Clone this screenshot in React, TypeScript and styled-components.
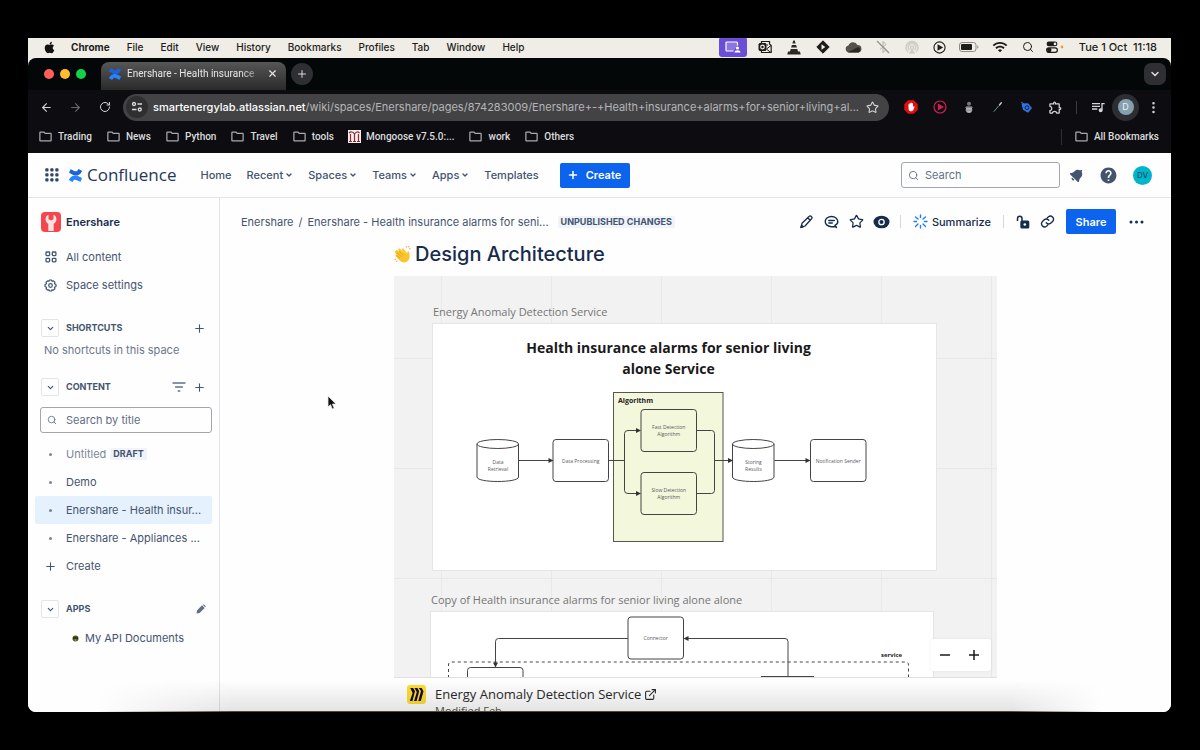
import React from "react";
import styled, { createGlobalStyle } from "styled-components";
import { FaApple, FaBell } from "react-icons/fa";
import { MdHelp, MdWifi, MdQueueMusic, MdOutlineExtension, MdOutlineFolder } from "react-icons/md";
import { Search, ChevronDown, Plus, X, ArrowLeft, ArrowRight, RotateCw, Star, MoreVertical, ExternalLink } from "lucide-react";

const GlobalStyle = createGlobalStyle`
  * { box-sizing: border-box; }
  body { margin: 0; background: #000; }
  button, input { font: inherit; color: inherit; margin: 0; padding: 0; border: 0; background: none; outline: none; }
  button { cursor: pointer; display: inline-flex; align-items: center; justify-content: center; flex: none; }
  a { color: inherit; text-decoration: none; }
  h1, h2, h3, p, ul { margin: 0; padding: 0; font-weight: inherit; }
  ul { list-style: none; }
  svg { display: block; flex: none; }
`;

const Desktop = styled.div`
  height: 100vh;
  padding: 38px 29px 38px 28px;
  background: #000;
  font-family: Inter, "Liberation Sans", sans-serif;
  font-size: 11px;
  line-height: 16px;
`;

const Screen = styled.div`
  height: 100%;
  display: flex;
  flex-direction: column;
  position: relative;
  background: #f0ede8;
  overflow: hidden;
  border-radius: 0 0 8px 8px;
`;

/* macOS menu bar */
const MenuBar = styled.header`
  height: 20px;
  flex: none;
  display: flex;
  align-items: center;
  justify-content: space-between;
  padding: 0 14px 2px 15px;
  background: #f0ede6;
  color: #1d1c1a;
`;
const MenuItems = styled.nav`
  display: flex;
  align-items: center;
  gap: 17px;
  font-size: 10px;

  svg {
    margin-right: -2px;
  }
`;
const MenuItem = styled.a<{ $strong?: boolean }>`
  font-weight: ${(p) => (p.$strong ? 700 : 500)};
  white-space: nowrap;
`;
const StatusItems = styled.div`
  display: flex;
  align-items: center;
`;
const Status = styled.span<{ $w?: number; $dim?: boolean }>`
  width: ${(p) => p.$w ?? 29}px;
  height: 18px;
  display: flex;
  align-items: center;
  justify-content: center;
  opacity: ${(p) => (p.$dim ? 0.4 : 1)};
`;
const ShareStatus = styled(Status)`
  background: #6a4fd6;
  border-radius: 3px;
  height: 20px;
  margin-right: 4px;
`;
const Clock = styled.time`
  margin-left: 10px;
  font-weight: 500;
  white-space: pre;
`;

/* Browser chrome */
const TabStrip = styled.div`
  height: 32px;
  flex: none;
  display: flex;
  align-items: center;
  padding: 0 5px 0 16px;
  background: #030707;
  border-radius: 8px 8px 0 0;
`;
const Lights = styled.div`
  display: flex;
  gap: 6px;
`;
const Light = styled.span<{ $color: string }>`
  width: 10px;
  height: 10px;
  border-radius: 50%;
  background: ${(p) => p.$color};
`;
const Tab = styled.div`
  width: 185px;
  height: 28px;
  align-self: flex-end;
  margin-left: 15px;
  padding: 0 8px 5px;
  display: flex;
  align-items: center;
  gap: 6px;
  border-radius: 8px 8px 0 0;
  background: linear-gradient(#565656, #2a2a2b);
  color: #e6e6e6;
`;
const TabTitle = styled.span`
  flex: 1;
  overflow: hidden;
  white-space: nowrap;
  font-family: Roboto, sans-serif;
  font-size: 10px;
  mask-image: linear-gradient(90deg, #000 85%, rgba(0, 0, 0, 0.2));
`;
const RoundButton = styled.button<{ $square?: boolean }>`
  width: 22px;
  height: 22px;
  border-radius: ${(p) => (p.$square ? "7px" : "50%")};
  background: #2e2e33;
  color: #d8d8d8;
  margin-left: ${(p) => (p.$square ? "auto" : "5px")};
`;
const Toolbar = styled.div`
  height: 34px;
  flex: none;
  display: flex;
  align-items: center;
  background: #0d0c10;
  color: #d5d5d8;
  padding: 0 3px 0 4px;
`;
const ToolButton = styled.button<{ $dim?: boolean }>`
  width: 29px;
  height: 28px;
  opacity: ${(p) => (p.$dim ? 0.45 : 1)};
`;
const AddressBar = styled.div`
  flex: 1;
  min-width: 0;
  height: 27px;
  margin: 0 7px 0 4px;
  padding: 0 6px 0 3px;
  display: flex;
  align-items: center;
  border-radius: 14px;
  background: #434345;
`;
const StarButton = styled.button`
  width: 22px;
  height: 22px;
`;
const SiteInfo = styled.button`
  width: 22px;
  height: 22px;
  border-radius: 50%;
  background: #2f2f31;
  margin-right: 5px;
`;
const Host = styled.label`
  color: #fff;
  font-weight: 500;
`;
const PathInput = styled.input`
  flex: 1;
  min-width: 0;
  color: #b5b5b8;
  text-overflow: ellipsis;
`;
const Divider = styled.span<{ $dark?: boolean }>`
  width: 1px;
  height: 13px;
  margin: 0 6px;
  background: ${(p) => (p.$dark ? "#3c3c40" : "#d5d8de")};
`;
const ProfileRing = styled.button`
  width: 27px;
  height: 27px;
  border-radius: 50%;
  background: #2c2e31;
`;
const ProfileDot = styled.span`
  width: 16px;
  height: 16px;
  border-radius: 50%;
  background: #86a0ae;
  color: #e9f2f6;
  font-size: 9px;
`;
const Bookmarks = styled.nav`
  height: 29px;
  flex: none;
  display: flex;
  align-items: center;
  gap: 14px;
  padding: 0 12px 4px 10px;
  background: #0d0c10;
  color: #dcdcde;
  font-family: Roboto, sans-serif;
  font-size: 10px;
  font-weight: 500;
`;
const Bookmark = styled.a`
  display: flex;
  align-items: center;
  gap: 5px;
  white-space: nowrap;
`;
const AllBookmarks = styled(Bookmark)`
  margin-left: auto;
  padding-left: 12px;
  border-left: 1px solid #303034;
`;

/* Confluence */
const Site = styled.div`
  flex: 1;
  min-height: 0;
  display: flex;
  flex-direction: column;
  background: #fefefe;
  color: #44546f;
  position: relative;
`;
const TopNav = styled.header`
  height: 45px;
  flex: none;
  display: flex;
  align-items: center;
  padding: 0 19px 0 17px;
  border-bottom: 1px solid #e3e4e8;
`;
const Brand = styled.a`
  display: flex;
  align-items: center;
  gap: 5px;
  margin: 0 24px 0 10px;
  color: #253858;
  font-family: "Open Sans", "Noto Sans", sans-serif;
  font-size: 17px;
`;
const NavLinks = styled.nav`
  display: flex;
  align-items: center;
  gap: 15px;
  font-weight: 500;
`;
const NavButton = styled.button`
  gap: 2px;
`;
const PrimaryButton = styled.button`
  height: 25px;
  padding: 0 9px 0 7px;
  gap: 7px;
  border-radius: 2px;
  background: #0c63ee;
  color: #fff;
  font-weight: 600;
`;
const CreateButton = styled(PrimaryButton)`
  margin-left: 21px;
`;
const SearchBox = styled.label<{ $wide?: boolean }>`
  height: 26px;
  display: flex;
  align-items: center;
  gap: ${(p) => (p.$wide ? 6 : 9)}px;
  padding: 0 6px;
  border: 1px solid #a2a6ae;
  border-radius: 3px;
  color: #626f86;
  ${(p) => p.$wide && "width: 159px; margin-left: auto;"}

  input {
    flex: 1;
    min-width: 0;
  }
  input::placeholder {
    color: #626f86;
    opacity: 1;
  }
`;
const NavIcons = styled.div`
  display: flex;
  align-items: center;
  gap: 15px;
  margin-left: 10px;
`;
const Avatar = styled.button`
  width: 19px;
  height: 19px;
  border-radius: 50%;
  background: #00b4cc;
  color: #12566b;
  font-size: 8px;
  font-weight: 500;
`;

const Body = styled.div`
  flex: 1;
  min-height: 0;
  display: flex;
`;
const Sidebar = styled.aside`
  width: 192px;
  flex: none;
  border-right: 1px solid #e3e4e8;
  padding: 12px 7px 0;
`;
const SpaceLink = styled.a`
  height: 24px;
  padding-left: 6px;
  margin-bottom: 9px;
  display: flex;
  align-items: center;
  gap: 5px;
  color: #172b4d;
  font-weight: 600;
`;
const SpaceLogo = styled.span`
  width: 20px;
  height: 20px;
  border-radius: 4px;
  background: #f5464e;
  display: flex;
  align-items: center;
  justify-content: center;
`;
const SideItem = styled.a<{ $active?: boolean }>`
  height: 28px;
  display: grid;
  grid-template-columns: 31px auto 1fr;
  align-items: center;
  border-radius: 2px;
  white-space: nowrap;
  background: ${(p) => (p.$active ? "#e6f1fe" : "transparent")};
`;
const SideIcon = styled.span`
  display: flex;
  justify-content: center;
`;
const Bullet = styled.span`
  width: 3px;
  height: 3px;
  border-radius: 50%;
  background: #7a869a;
`;
const Muted = styled.span`
  color: #7a869a;
`;
const Lozenge = styled.span`
  justify-self: start;
  padding: 0 3px;
  margin-left: 4px;
  border-radius: 2px;
  background: #f0f3fa;
  color: #44546f;
  font-size: 9px;
  line-height: 12px;
  font-weight: 700;
`;
const SectionHead = styled.div`
  height: 20px;
  margin-top: 19px;
  padding: 0 6px;
  display: flex;
  align-items: center;
  gap: 7px;

  h2 {
    flex: 1;
    font-size: 9px;
    font-weight: 700;
  }
`;
const Toggle = styled.button`
  width: 18px;
  height: 18px;
  border: 1px solid #e3e5ea;
  border-radius: 2px;
`;
const Empty = styled.p`
  margin: 4px 0 0 9px;
  color: #6b778c;
`;
const SideSearch = styled.div`
  margin: 10px 0 7px 5px;
`;
const AppLink = styled(SideItem)`
  grid-template-columns: 19px 1fr;
  padding-left: 31px;
  margin-top: 5px;
`;

const Main = styled.main`
  flex: 1;
  min-width: 0;
  position: relative;
`;
const PageBar = styled.div`
  height: 44px;
  padding: 3px 22px 0 21px;
  display: flex;
  align-items: center;
  justify-content: space-between;
`;
const Crumbs = styled.nav`
  display: flex;
  align-items: center;
  gap: 5px;
  white-space: nowrap;
`;
const Actions = styled.div`
  display: flex;
  align-items: center;
  color: #172b4d;
`;
const Action = styled.button`
  width: 25px;
  height: 24px;
`;
const Summarize = styled.button`
  gap: 4px;
  margin: 0 6px;
  font-weight: 500;
`;
const ShareButton = styled(PrimaryButton)`
  min-width: 50px;
  padding: 0 9px;
  margin: 0 8px 0 6px;
`;
const Article = styled.article`
  width: 603px;
  max-width: 100%;
  margin: 0 auto;
`;
const Heading = styled.h1`
  display: flex;
  align-items: center;
  gap: 4px;
  height: 24px;
  font-size: 20px;
  line-height: 24px;
  font-weight: 500;
  color: #172b4d;
`;
const Board = styled.section`
  position: relative;
  height: 402px;
  margin-top: 10px;
  padding-top: 24px;
  overflow: hidden;
  border-bottom: 1px solid #e0e0e0;
  background-color: #f2f2f2;
  background-image: linear-gradient(90deg, #e8e8e8 1px, transparent 1px), linear-gradient(#e8e8e8 1px, transparent 1px);
  background-size: 110px 110px;
  background-position: 47px 82px;
  font-family: "Open Sans", "Noto Sans", sans-serif;
`;
const FrameTitle = styled.h2`
  font-size: 11px;
  line-height: 24px;
  color: #757575;
`;
const Frame = styled.div<{ $second?: boolean }>`
  margin: ${(p) => (p.$second ? "18px 64px 0 37px" : "0 61px 0 39px")};
`;
const Sheet = styled.div`
  background: #fff;
  outline: 1px solid #e6e6e6;
`;
const ZoomControls = styled.div`
  position: absolute;
  right: 6px;
  bottom: 6px;
  width: 60px;
  height: 32px;
  padding-right: 4px;
  display: flex;
  align-items: center;
  justify-content: center;
  gap: 19px;
  background: #fff;
  border-radius: 3px;
  box-shadow: 0 0 4px rgba(0, 0, 0, 0.06);
`;
const EmbedFooter = styled.footer`
  display: grid;
  grid-template-columns: 28px 1fr;
  align-items: center;
  padding: 6px 13px 0;
  font-family: "Open Sans", "Noto Sans", sans-serif;
  color: #2b2b2b;
`;
const EmbedLink = styled.a`
  display: flex;
  align-items: center;
  gap: 3px;
  font-size: 13px;
  line-height: 20px;
`;
const Modified = styled.p`
  grid-column: 2;
  line-height: 14px;
  color: #555;
`;
const Cursor = styled.span`
  position: absolute;
  left: 107px;
  top: 197px;
`;
const DockShade = styled.div`
  position: absolute;
  left: 0;
  right: 0;
  bottom: 0;
  height: 32px;
  border-bottom: 1px solid #57482f;
  background: linear-gradient(transparent, rgba(0, 0, 0, 0.1));
  mask-image: linear-gradient(90deg, transparent 6%, #000 18%, #000 86%, transparent 94%);
  pointer-events: none;
`;

const ConfluenceMark = ({ size = 13 }: { size?: number }) => (
  <svg width={size} height={size} viewBox="0 0 24 24">
    <path fill="#2684ff" d="M.9 18.2c-.3.4-.5.9-.7 1.200-.2.400-.1.900.3 1.200l5 3.100c.4.200.9.100 1.200-.3.200-.3.500-.8.800-1.300 2-3.300 4-2.900 7.700-1.100l5 2.300c.400.200.900 0 1.200-.4l2.400-5.400c.2-.4 0-.9-.4-1.100-1-.5-3.100-1.500-5-2.400C11.600 10.700 5.600 10.900.9 18.200z" />
    <path fill="#1d62d6" d="M23.100 5.800c.3-.4.500-.9.700-1.200.2-.4.100-.9-.3-1.200L18.500.3c-.4-.2-1-.1-1.200.3-.2.300-.5.800-.8 1.300-2 3.300-4 2.900-7.700 1.100L3.900.7c-.4-.2-.9 0-1.200.4L.300 6.500c-.2.400 0 .900.4 1.100 1 .5 3.100 1.500 5 2.400 6.700 3.300 12.700 3.100 17.400-4.200z" />
  </svg>
);

const TuneIcon = () => (
  <svg width="12" height="12" viewBox="0 0 12 12" fill="none" stroke="#dcdcdc" strokeWidth="1.300">
    <circle cx="3" cy="3" r="1.500" /><path d="M6.500 3H11M1 8.500h4.500" /><circle cx="8.800" cy="8.500" r="1.500" />
  </svg>
);

const ShareScreenIcon = () => (
  <svg width="16" height="12" viewBox="0 0 16 12" fill="none" stroke="#fff" strokeWidth="1.200">
    <path d="M8.500 10H2a1 1 0 0 1-1-1V2a1 1 0 0 1 1-1h9.500a1 1 0 0 1 1 1v2.500" fill="#8b76e6" />
    <circle cx="12.500" cy="7" r="1.600" fill="#fff" stroke="none" /><path d="M9.500 11.500c0-3 6-3 6 0z" fill="#fff" stroke="none" />
  </svg>
);

const OutlookIcon = () => (
  <svg width="14" height="14" viewBox="0 0 14 14" fill="none" stroke="#1d1c1a">
    <path d="M3.500 3V1.500h8V4l1.700 1.500v7H3.500V11" strokeWidth="1.200" />
    <rect x="1" y="3.500" width="7" height="7" rx=".8" fill="#1d1c1a" /><circle cx="4.500" cy="7" r="1.800" stroke="#f0ede6" strokeWidth="1.200" /><path d="M8.500 5h1.500M8.500 9l4.500-3.500M9 9.500l4 3" />
  </svg>
);

const ConeIcon = () => (
  <svg width="14" height="15" viewBox="0 0 14 15" fill="#2b2925">
    <path d="M6.300.5h1.400l.9 3H5.400zM4.900 5h4.200l.8 2.500H4.100zM3.700 9h6.600l.7 2.500H13l.7 3H.3l.7-3h2z" />
  </svg>
);

const DiamondIcon = () => (
  <svg width="14" height="14" viewBox="0 0 14 14">
    <path d="M7 .8 13.200 7 7 13.200.8 7z" fill="#1d1c1a" stroke="#1d1c1a" strokeLinejoin="round" />
    <path d="M5.500 4.200 9.300 7 5.500 9.800z" fill="#f0ede6" />
  </svg>
);

const CloudIcon = () => (
  <svg width="17" height="11" viewBox="0 0 17 11">
    <path d="M4 10.500a3.500 3.500 0 0 1-.6-6.900A5 5 0 0 1 12.500 3a3.800 3.800 0 0 1 1 7.500z" fill="#55524c" />
    <path d="M3 10.300 13.300 5a3 3 0 0 1 .2 5.500H4z" fill="#2a2825" />
  </svg>
);

const BluetoothOff = () => (
  <svg width="14" height="14" viewBox="0 0 14 14" fill="none" stroke="#1d1c1a">
    <path d="M4 4.500l6 5-3 3v-11l3 3-6 5" opacity=".7" /><path d="m1 1 12 12" strokeWidth="1.400" />
  </svg>
);

const AirdropIcon = () => (
  <svg width="14" height="14" viewBox="0 0 14 14" fill="none" stroke="#a09c92" strokeWidth="1.500">
    <path d="M3 12a6 6 0 1 1 8 0M4.500 10a3.800 3.800 0 1 1 5 0M6 8.500a1.500 1.500 0 1 1 2 0" /><path d="M5 13l2-4 2 4z" fill="#a09c92" />
  </svg>
);

const PlayIcon = ({ color, size = 13 }: { color: string; size?: number }) => (
  <svg width={size} height={size} viewBox="0 0 14 14" fill="none" stroke={color} strokeWidth="1.200">
    <circle cx="7" cy="7" r="6" /><path d="M5.500 4.500 9.800 7 5.500 9.500z" fill={color} />
  </svg>
);

const BatteryIcon = () => (
  <svg width="20" height="10" viewBox="0 0 20 10">
    <rect x=".5" y=".5" width="16.500" height="9" rx="2.500" fill="none" stroke="#8f8c85" />
    <rect x="2" y="2" width="11" height="6" rx="1" fill="#1d1c1a" /><path d="M18.300 3.300v3.400c1.500-.6 1.500-2.800 0-3.400z" fill="#8f8c85" />
  </svg>
);

const ControlIcon = () => (
  <svg width="18" height="12" viewBox="0 0 18 12">
    <rect x=".6" y=".6" width="10.800" height="4.600" rx="2.300" fill="#1d1c1a" /><circle cx="9" cy="2.900" r="1.300" fill="#f0ede6" />
    <rect x=".6" y="6.800" width="10.800" height="4.600" rx="2.300" fill="none" stroke="#1d1c1a" strokeWidth="1.200" /><circle cx="3.200" cy="9.100" r="2.300" fill="#1d1c1a" />
    <circle cx="16" cy="6" r="1.400" fill="#f29a2e" />
  </svg>
);

const AdblockIcon = () => (
  <svg width="14" height="14" viewBox="0 0 14 14">
    <path d="M4.200.3h5.600l3.900 3.900v5.600l-3.900 3.900H4.200L.3 9.800V4.200z" fill="#e80c12" />
    <path d="M4.500 7V4.200h1V3.300h1.200v-.6h1.200v.6H9V7l.8-.8.900.6L9 10.500c-.6 1-3.500 1-4 0-.4-.8-.5-2-.5-3.500z" fill="#fff" />
  </svg>
);

const BugIcon = () => (
  <svg width="10" height="13" viewBox="0 0 10 13">
    <circle cx="5" cy="2.800" r="2" fill="#77777c" /><path d="M2 5.500h6V9a3 3 0 0 1-6 0z" fill="#b4b4b8" /><path d="M1 6.500h8M1 9h8" stroke="#77777c" strokeWidth=".7" />
  </svg>
);

const PickerIcon = () => (
  <svg width="12" height="12" viewBox="0 0 12 12" stroke="#c9c9cc" strokeLinecap="round">
    <path d="m2 10.500 4.500-5.500" stroke="#5f9a78" /><path d="m7.500 4 1.800-2.300" strokeWidth="1.400" />
  </svg>
);

const TagIcon = () => (
  <svg width="13" height="13" viewBox="0 0 13 13">
    <path d="M1.500 2.500 8 2.300 12 7l-4 4.700-5-3z" fill="#2f77e8" /><circle cx="7" cy="6.700" r="1.900" fill="none" stroke="#0d1c40" /><path d="M1 1l3 2" stroke="#2f77e8" />
  </svg>
);

const MongooseIcon = () => (
  <svg width="13" height="13" viewBox="0 0 13 13">
    <rect width="13" height="13" fill="#f6eeee" /><path d="M1 11.500h3M5 11.500h3M9 11.500h3M2.500 11V4M6.500 11V4M10.500 11V4M1 3c2-2 4-1 5.500 1C8 1.500 10 1.500 11.500 3" fill="none" stroke="#8d2b35" strokeWidth="1.200" />
  </svg>
);

const AppGrid = () => (
  <svg width="14" height="14" viewBox="0 0 14 14" fill="#344563">
    {[0, 5, 10].map((y) => [0, 5, 10].map((x) => <rect key={`${x}-${y}`} x={x + 0.3} y={y + 0.3} width="3.200" height="3.200" rx=".9" />))}
  </svg>
);

const WrenchIcon = () => (
  <svg width="12" height="17" viewBox="0 0 12 17">
    <path d="M3.500.8v4.400L6 6.600l2.500-1.400V.8c3.800 1.500 4 7.300.2 9V17H3.300V9.800C-.5 8.100-.3 2.300 3.500.8z" fill="#f3e3e4" />
  </svg>
);

const ContentIcon = () => (
  <svg width="12" height="12" viewBox="0 0 12 12" fill="none" stroke="#44546f" strokeWidth="1.300">
    {[1, 7.3].map((y) => [1, 7.3].map((x) => <rect key={`${x}-${y}`} x={x} y={y} width="3.600" height="3.600" rx=".8" />))}
  </svg>
);

const GearIcon = () => (
  <svg width="13" height="13" viewBox="0 0 13 13" fill="none" stroke="#44546f" strokeWidth="1.200">
    <path d="M5.500 1h2l.5 1.200 1.400-.3 1.500 1.400-.4 1.400 1.500.8v2l-1.500.8.4 1.400-1.500 1.400L8 10.800 7.500 12h-2L5 10.800l-1.400.3-1.500-1.400.4-1.400L1 7.500v-2l1.500-.8-.4-1.400 1.500-1.400L5 2.200z" strokeLinejoin="round" />
    <circle cx="6.500" cy="6.500" r="1.800" />
  </svg>
);

const FilterIcon = () => (
  <svg width="14" height="10" viewBox="0 0 14 10" stroke="#626f86" strokeWidth="1.300" strokeLinecap="round">
    <path d="M1 1h12M3.500 5h7M6.200 9h1.600" />
  </svg>
);

const SolidPencil = () => (
  <svg width="10" height="10" viewBox="0 0 10 10" fill="#626f86">
    <path d="M6 1.300 8.700 4 3.600 9.100.5 9.600 1 6.400zM6.700.7c1.200-1.200 3.900 1.300 2.600 2.600z" />
  </svg>
);

const EditIcon = () => (
  <svg width="15" height="15" viewBox="0 0 15 15" fill="none" stroke="#172b4d" strokeWidth="1.300" strokeLinejoin="round">
    <path d="M10.300 2.200c1-1.200 3.600 1 2.500 2.300L6 12l-4 1.500 1-4.200zM8.800 4l2.500 2.300" /><path d="m2 13.500.6-2.200 1.500 1.500z" fill="#172b4d" />
  </svg>
);

const CommentIcon = () => (
  <svg width="15" height="14" viewBox="0 0 15 14" fill="none" stroke="#172b4d" strokeWidth="1.400" strokeLinecap="round">
    <path d="M12.500 12.500 11 10.300c1.800-.8 2.800-2 2.800-3.500 0-3-2.700-5.300-6.300-5.300S1.200 3.800 1.200 6.500s2.700 5.200 6.300 5.200h4" /><path d="M4.800 5.500h5.500M4.800 8h3.500" />
  </svg>
);

const EyeIcon = () => (
  <svg width="17" height="14" viewBox="0 0 17 14">
    <ellipse cx="8.500" cy="7" rx="8" ry="6.300" fill="#172b4d" /><circle cx="8.500" cy="7" r="2.700" fill="none" stroke="#fff" strokeWidth="1.300" />
  </svg>
);

const SparkIcon = () => (
  <svg width="15" height="15" viewBox="0 0 15 15" stroke="#1d7afc" strokeWidth="1.400" strokeLinecap="round">
    <path d="M7.500 1v2.500M7.500 11.500V14M1 7.500h2.500M11.500 7.500H14M2.500 3 5 5M10 10l2.500 2.500M12.500 3 10 5M2.500 12.500 5 10" />
  </svg>
);

const UnlockIcon = () => (
  <svg width="14" height="14" viewBox="0 0 14 14">
    <path d="M1.500 6V3.500c0-3 4.500-3 4.500 0V6" fill="none" stroke="#172b4d" strokeWidth="1.500" />
    <rect x="4.300" y="5.500" width="9" height="8" rx="1.500" fill="#172b4d" /><circle cx="8.800" cy="9.500" r="1.300" fill="#fff" />
  </svg>
);

const LinkIcon = () => (
  <svg width="15" height="15" viewBox="0 0 24 24" fill="none" stroke="#172b4d" strokeWidth="2.200" strokeLinecap="round">
    <path d="M10 14a5 5 0 0 0 7.500.5l3-3a5 5 0 0 0-7-7l-1.800 1.700M14 10a5 5 0 0 0-7.500-.5l-3 3a5 5 0 0 0 7 7l1.800-1.700" />
  </svg>
);

const MoreIcon = () => (
  <svg width="15" height="4" viewBox="0 0 15 4" fill="#172b4d"><circle cx="2" cy="2" r="1.500" /><circle cx="7.500" cy="2" r="1.500" /><circle cx="13" cy="2" r="1.500" /></svg>
);

const ApiIcon = () => (
  <svg width="7" height="7" viewBox="0 0 7 7"><circle cx="3.500" cy="3.500" r="3" fill="#4a5a1e" /><path d="M1 3h5" stroke="#1d2109" /><circle cx="3.500" cy="5" r=".8" fill="#a8b86a" /></svg>
);

const ClapIcon = () => (
  <svg width="17" height="18" viewBox="0 0 17 18">
    <path d="M2 4.500c.8-.8 1.500-.5 2.200.2L7 7 4.500 4c-.8-1 .7-2.200 1.600-1.200L10 7l-2-3c-.7-1.200 1-2 1.700-1l3.500 4.500.3-1.700c.3-1 1.500-.8 1.700.2.500 3 1 6.500-1.200 8.800-2.300 2.300-5.700 2-8 0L1.500 10c-.9-.9.300-2 1.200-1.300L1 6.500C.3 5.500 1.200 4.800 2 5z" fill="#fbc62d" transform="translate(0 1)" />
    <path d="m3 7.500 4.500 4.300M5 6l4.500 4.300M2.800 10.500 6 13.300" stroke="#e29b1b" strokeWidth=".8" /><path d="m12 1 .5 1.500M15 1l-.8 1.500M.5 14.500l1.500-.4M2.500 17l.7-1.500M16.500 3.500 15 4" stroke="#f0a052" />
  </svg>
);

const MiroIcon = () => (
  <svg width="19" height="19" viewBox="0 0 19 19">
    <rect width="19" height="19" rx="3" fill="#ffdd33" />
    <path d="M3.300 3h2.900l1.800 3.300L5.400 16H2.900L5.600 8zM7.500 3h2.900l1.800 3.300L9.600 16H7.100L9.800 7zM11.700 3h2.900l1.900 3.300L13.800 16h-2.500L14 6z" fill="#150b2b" />
  </svg>
);

const Label = ({ x, y, lines }: { x: number; y: number; lines: string[] }) => (
  <text x={x} y={y} textAnchor="middle" fontSize="5" fill="#5a5a5a" stroke="none">
    {lines.map((l, i) => (
      <tspan key={l} x={x} dy={i ? 7 : 0}>{l}</tspan>
    ))}
  </text>
);

const Cylinder = ({ x, lines }: { x: number; lines: string[] }) => (
  <g>
    <path d={`M${x} 120v33c0 6 41.500 6 41.500 0v-33`} />
    <ellipse cx={x + 20.75} cy="120" rx="20.750" ry="4.500" />
    <Label x={x + 21} y={139.5} lines={lines} />
  </g>
);

const Node = ({ x, y, lines }: { x: number; y: number; lines: string[] }) => (
  <g>
    <rect x={x} y={y} width="55.500" height="42" rx="3" />
    <Label x={x + 27.75} y={y + (lines.length > 1 ? 19.5 : 23)} lines={lines} />
  </g>
);

const Head = ({ x, y }: { x: number; y: number }) => <path d={`M${x} ${y}l-5-2.500v5z`} fill="#333" stroke="none" />;

const ServiceDiagram = () => (
  <svg width="503" height="246" viewBox="0 0 503 246" fill="none" stroke="#444">
    <text x="235.500" y="29" textAnchor="middle" fontSize="14" fontWeight="700" fill="#1a1a1a" stroke="none">
      Health insurance alarms for senior living
      <tspan x="235.500" dy="21">alone Service</tspan>
    </text>
    <rect x="180.500" y="68.500" width="109.500" height="149" fill="#f3f7dc" stroke="#55584a" />
    <text x="185" y="79" fontSize="7" fontWeight="700" fill="#222" stroke="none">Algorithm</text>
    <Cylinder x={44} lines={["Data", "Retrieval"]} />
    <Node x={120} y={115.5} lines={["Data Processing"]} />
    <Node x={208} y={85.5} lines={["Fast Detection", "Algorithm"]} />
    <Node x={208} y={148.5} lines={["Slow Detection", "Algorithm"]} />
    <Cylinder x={299.5} lines={["Storing", "Results"]} />
    <Node x={377.5} y={115.5} lines={["Notification Sender"]} />
    <path d="M86 136.500h32M176 136.500h15.500M195 106.500h10M195 169.500h10M195 106.500q-3.500 0-3.500 3v57q0 3 3.500 3M263.500 106.500h15q3 0 3 3v57q0 3-3 3h-15M281.500 136.500h15M341.500 136.500h33" />
    <Head x={120.5} y={136.5} /><Head x={208} y={106.5} /><Head x={208} y={169.5} /><Head x={300} y={136.5} /><Head x={377.5} y={136.5} />
  </svg>
);

const ConnectorDiagram = () => (
  <svg width="502" height="66" viewBox="0 0 502 66" fill="none" stroke="#444">
    <path d="M17.500 66V53q0-3 3-3h454q3 0 3 3v13" strokeDasharray="3 3" />
    <Node x={197} y={5} lines={["Connector"]} />
    <path d="M197 26.500H67.500q-3 0-3 3V52M257 26.500h97q3 0 3 3V64" />
    <path d="M64.500 55.500l-2.500-5h5zM252.500 26.500l5-2.500v5z" fill="#333" stroke="none" />
    <path d="M36.500 66v-7.500q0-3 3-3H89q3 0 3 3V66M330 64.500h53" />
    <text x="450" y="45" fontSize="6" fontWeight="700" fill="#222" stroke="none">service</text>
  </svg>
);

const menu = ["File", "Edit", "View", "History", "Bookmarks", "Profiles", "Tab", "Window", "Help"];
const folders = ["Trading", "News", "Python", "Travel", "tools"];

const FolderLink = ({ name }: { name: string }) => (
  <Bookmark href="#"><MdOutlineFolder size={15} color="#a9a9ad" />{name}</Bookmark>
);

export default function App() {
  return (
    <Desktop>
      <GlobalStyle />
      <Screen>
        <MenuBar>
          <MenuItems>
            <FaApple size={13} color="#111" />
            <MenuItem href="#" $strong>Chrome</MenuItem>
            {menu.map((m) => <MenuItem href="#" key={m}>{m}</MenuItem>)}
          </MenuItems>
          <StatusItems>
            <ShareStatus $w={28}><ShareScreenIcon /></ShareStatus>
            <Status><OutlookIcon /></Status>
            <Status><ConeIcon /></Status>
            <Status><DiamondIcon /></Status>
            <Status $w={31}><CloudIcon /></Status>
            <Status $dim><BluetoothOff /></Status>
            <Status $w={28} $dim><AirdropIcon /></Status>
            <Status $w={27}><PlayIcon color="#1d1c1a" /></Status>
            <Status $w={33}><BatteryIcon /></Status>
            <Status><MdWifi size={16} /></Status>
            <Status $w={26}><Search size={12} /></Status>
            <Status $w={28}><ControlIcon /></Status>
            <Clock>Tue 1 Oct  11:18</Clock>
          </StatusItems>
        </MenuBar>
        <TabStrip>
          <Lights><Light $color="#ff5f57" /><Light $color="#febc2e" /><Light $color="#14d04a" /></Lights>
          <Tab>
            <ConfluenceMark size={12} />
            <TabTitle>Enershare - Health insurance</TabTitle>
            <button aria-label="Close tab"><X size={11} strokeWidth={2.5} /></button>
          </Tab>
          <RoundButton aria-label="New tab"><Plus size={12} /></RoundButton>
          <RoundButton $square aria-label="Search tabs"><ChevronDown size={12} strokeWidth={3} /></RoundButton>
        </TabStrip>
        <Toolbar>
          <ToolButton aria-label="Back"><ArrowLeft size={13} /></ToolButton>
          <ToolButton aria-label="Forward" $dim><ArrowRight size={13} /></ToolButton>
          <ToolButton aria-label="Reload"><RotateCw size={12} /></ToolButton>
          <AddressBar>
            <SiteInfo aria-label="Site information"><TuneIcon /></SiteInfo>
            <Host htmlFor="address">smartenergylab.atlassian.net</Host>
            <PathInput id="address" aria-label="Address" defaultValue="/wiki/spaces/Enershare/pages/874283009/Enershare+-+Health+insurance+alarms+for+senior+living+al..." />
            <StarButton aria-label="Bookmark this page"><Star size={13} /></StarButton>
          </AddressBar>
          <ToolButton aria-label="Ad blocker"><AdblockIcon /></ToolButton>
          <ToolButton aria-label="Video"><PlayIcon color="#d01f52" size={14} /></ToolButton>
          <ToolButton aria-label="Debugger"><BugIcon /></ToolButton>
          <ToolButton aria-label="Color picker"><PickerIcon /></ToolButton>
          <ToolButton aria-label="Tags"><TagIcon /></ToolButton>
          <ToolButton aria-label="Extensions"><MdOutlineExtension size={15} /></ToolButton>
          <Divider $dark />
          <ToolButton aria-label="Media"><MdQueueMusic size={16} /></ToolButton>
          <ProfileRing aria-label="Profile"><ProfileDot>D</ProfileDot></ProfileRing>
          <ToolButton aria-label="Browser menu"><MoreVertical size={15} /></ToolButton>
        </Toolbar>
        <Bookmarks>
          {folders.map((f) => <FolderLink key={f} name={f} />)}
          <Bookmark href="#"><MongooseIcon />Mongoose v7.5.0:...</Bookmark>
          <FolderLink name="work" />
          <FolderLink name="Others" />
          <AllBookmarks href="#"><MdOutlineFolder size={15} color="#a9a9ad" />All Bookmarks</AllBookmarks>
        </Bookmarks>

        <Site>
          <TopNav>
            <button aria-label="Switch apps"><AppGrid /></button>
            <Brand href="#"><ConfluenceMark />Confluence</Brand>
            <NavLinks>
              <a href="#">Home</a>
              {["Recent", "Spaces", "Teams", "Apps"].map((n) => (
                <NavButton key={n}>{n}<ChevronDown size={8} strokeWidth={4} /></NavButton>
              ))}
              <a href="#">Templates</a>
            </NavLinks>
            <CreateButton><Plus size={12} strokeWidth={3} />Create</CreateButton>
            <SearchBox $wide><Search size={11} /><input type="search" placeholder="Search" aria-label="Search" /></SearchBox>
            <NavIcons>
              <button aria-label="Notifications"><FaBell size={14} transform="rotate(45)" /></button>
              <button aria-label="Help"><MdHelp size={19} /></button>
              <Avatar>DV</Avatar>
            </NavIcons>
          </TopNav>
          <Body>
            <Sidebar>
              <SpaceLink href="#"><SpaceLogo><WrenchIcon /></SpaceLogo>Enershare</SpaceLink>
              <SideItem href="#"><SideIcon><ContentIcon /></SideIcon>All content</SideItem>
              <SideItem href="#"><SideIcon><GearIcon /></SideIcon>Space settings</SideItem>
              <SectionHead>
                <Toggle aria-label="Toggle shortcuts"><ChevronDown size={9} strokeWidth={3} /></Toggle>
                <h2>SHORTCUTS</h2>
                <button aria-label="Add shortcut"><Plus size={13} /></button>
              </SectionHead>
              <Empty>No shortcuts in this space</Empty>
              <SectionHead>
                <Toggle aria-label="Toggle content"><ChevronDown size={9} strokeWidth={3} /></Toggle>
                <h2>CONTENT</h2>
                <button aria-label="Filter"><FilterIcon /></button>
                <button aria-label="Add content"><Plus size={13} /></button>
              </SectionHead>
              <SideSearch>
                <SearchBox><Search size={10} /><input placeholder="Search by title" aria-label="Search by title" /></SearchBox>
              </SideSearch>
              <SideItem href="#"><SideIcon><Bullet /></SideIcon><Muted>Untitled</Muted><Lozenge>DRAFT</Lozenge></SideItem>
              <SideItem href="#"><SideIcon><Bullet /></SideIcon>Demo</SideItem>
              <SideItem href="#" $active><SideIcon><Bullet /></SideIcon>Enershare - Health insur...</SideItem>
              <SideItem href="#"><SideIcon><Bullet /></SideIcon>Enershare - Appliances ...</SideItem>
              <SideItem href="#"><SideIcon><Plus size={13} /></SideIcon>Create</SideItem>
              <SectionHead>
                <Toggle aria-label="Toggle apps"><ChevronDown size={9} strokeWidth={3} /></Toggle>
                <h2>APPS</h2>
                <button aria-label="Edit apps"><SolidPencil /></button>
              </SectionHead>
              <AppLink href="#"><SideIcon><ApiIcon /></SideIcon>My API Documents</AppLink>
            </Sidebar>
            <Main>
              <PageBar>
                <Crumbs>
                  <a href="#">Enershare</a><span>/</span>
                  <a href="#">Enershare - Health insurance alarms for seni...</a>
                  <Lozenge>UNPUBLISHED CHANGES</Lozenge>
                </Crumbs>
                <Actions>
                  <Action aria-label="Edit"><EditIcon /></Action>
                  <Action aria-label="Comments"><CommentIcon /></Action>
                  <Action aria-label="Star"><Star size={15} /></Action>
                  <Action aria-label="Watch"><EyeIcon /></Action>
                  <Divider />
                  <Summarize><SparkIcon />Summarize</Summarize>
                  <Divider />
                  <Action aria-label="Restrictions"><UnlockIcon /></Action>
                  <Action aria-label="Copy link"><LinkIcon /></Action>
                  <ShareButton>Share</ShareButton>
                  <Action aria-label="More actions"><MoreIcon /></Action>
                </Actions>
              </PageBar>
              <Article>
                <Heading><ClapIcon />Design Architecture</Heading>
                <Board>
                  <Frame>
                    <FrameTitle>Energy Anomaly Detection Service</FrameTitle>
                    <Sheet><ServiceDiagram /></Sheet>
                  </Frame>
                  <Frame $second>
                    <FrameTitle>Copy of Health insurance alarms for senior living alone alone</FrameTitle>
                    <Sheet><ConnectorDiagram /></Sheet>
                  </Frame>
                  <ZoomControls>
                    <button aria-label="Zoom out"><svg width="10" height="10" viewBox="0 0 10 10" stroke="#1a1a1a" strokeWidth="1.500"><path d="M0 5h10" /></svg></button>
                    <button aria-label="Zoom in"><svg width="10" height="10" viewBox="0 0 10 10" stroke="#1a1a1a" strokeWidth="1.500"><path d="M0 5h10M5 0v10" /></svg></button>
                  </ZoomControls>
                </Board>
                <EmbedFooter>
                  <MiroIcon />
                  <EmbedLink href="#">Energy Anomaly Detection Service<ExternalLink size={13} /></EmbedLink>
                  <Modified>Modified Feb</Modified>
                </EmbedFooter>
              </Article>
              <Cursor>
                <svg width="10" height="15" viewBox="0 0 10 15"><path d="M1 1v11l2.500-2.300L5.300 14l1.900-.8-1.800-4.100H9z" fill="#111" stroke="#eee" strokeWidth=".8" /></svg>
              </Cursor>
            </Main>
          </Body>
          <DockShade />
        </Site>
      </Screen>
    </Desktop>
  );
}
